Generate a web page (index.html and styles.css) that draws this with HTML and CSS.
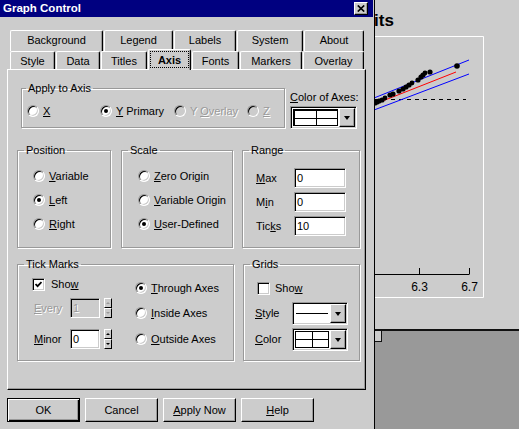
FILE: index.html
```html
<!DOCTYPE html>
<html lang="en">
<head>
<meta charset="utf-8">
<title>Graph Control</title>
<link rel="stylesheet" href="styles.css">
</head>
<body>
<div class="screen">
  <div class="dialog">
    <div class="titlebar">
      <span class="title">Graph Control</span>
      <span class="close"><svg width="8" height="7" viewBox="0 0 8 7"><path d="M0.8 0.5L7.2 6.5M7.2 0.5L0.8 6.5" stroke="#000" stroke-width="1.7" fill="none"/></svg></span>
    </div>

    <div class="tabs">
      <div class="tabrow row1">
        <div class="tab t-bg">Background</div>
        <div class="tab t-legend">Legend</div>
        <div class="tab t-labels">Labels</div>
        <div class="tab t-system">System</div>
        <div class="tab t-about">About</div>
      </div>
      <div class="tabrow row2">
        <div class="tab t-style">Style</div>
        <div class="tab t-data">Data</div>
        <div class="tab t-titles">Titles</div>
        <div class="tab t-axis active">Axis</div>
        <div class="tab t-fonts">Fonts</div>
        <div class="tab t-markers">Markers</div>
        <div class="tab t-overlay">Overlay</div>
      </div>
    </div>

    <div class="panel">
      <div class="prow r1">
        <fieldset class="grp g-apply">
          <legend class="lg lg-apply">Apply to Axis</legend>
          <div class="gb apply-body">
            <label class="opt o-x"><span class="radio"></span><span><u>X</u></span></label>
            <label class="opt o-yp"><span class="radio on"></span><span><u>Y</u> Primary</span></label>
            <label class="opt o-yo dis"><span class="radio"></span><span>Y <u>O</u>verlay</span></label>
            <label class="opt dis"><span class="radio"></span><span><u>Z</u></span></label>
          </div>
        </fieldset>
        <div class="coloraxes">
          <div class="ca-lbl"><u>C</u>olor of Axes:</div>
          <div class="combo c-axes">
            <div class="cf"><span class="sw-grid"></span></div>
            <span class="dd"></span>
          </div>
        </div>
      </div>

      <div class="prow r2">
        <fieldset class="grp g-pos">
          <legend class="lg">Position</legend>
          <div class="gb list-body pos-body">
            <label class="opt row"><span class="radio"></span><span><u>V</u>ariable</span></label>
            <label class="opt row"><span class="radio on"></span><span><u>L</u>eft</span></label>
            <label class="opt row"><span class="radio"></span><span><u>R</u>ight</span></label>
          </div>
        </fieldset>
        <fieldset class="grp g-scale">
          <legend class="lg">Scale</legend>
          <div class="gb list-body scale-body">
            <label class="opt row"><span class="radio"></span><span><u>Z</u>ero Origin</span></label>
            <label class="opt row"><span class="radio"></span><span><u>V</u>ariable Origin</span></label>
            <label class="opt row"><span class="radio on"></span><span><u>U</u>ser-Defined</span></label>
          </div>
        </fieldset>
        <fieldset class="grp g-range">
          <legend class="lg">Range</legend>
          <div class="gb range-body">
            <div class="rrow"><span class="rl"><u>M</u>ax</span><span class="field f-range">0</span></div>
            <div class="rrow"><span class="rl">M<u>i</u>n</span><span class="field f-range">0</span></div>
            <div class="rrow"><span class="rl">Tic<u>k</u>s</span><span class="field f-range">10</span></div>
          </div>
        </fieldset>
      </div>

      <div class="prow r3">
        <fieldset class="grp g-tick">
          <legend class="lg">Tick Marks</legend>
          <div class="gb tick-body">
            <div class="tcol">
              <label class="chkrow c-tick">
                <span class="check"><svg width="7" height="7" viewBox="0 0 7 7"><path d="M0.5 3L2.6 5.2L6.5 1" stroke="#000" stroke-width="1.8" fill="none"/></svg></span>
                <span>Sho<u>w</u></span>
              </label>
              <div class="spinrow sr1 dis">
                <span class="slbl"><u>E</u>very</span>
                <span class="field f-spin">1</span>
                <span class="spin"><span class="up"></span><span class="dn"></span></span>
              </div>
              <div class="spinrow sr2">
                <span class="slbl"><u>M</u>inor</span>
                <span class="field f-spin">0</span>
                <span class="spin"><span class="up"></span><span class="dn"></span></span>
              </div>
            </div>
            <div class="rcol">
              <label class="opt trow t1"><span class="radio on"></span><span><u>T</u>hrough Axes</span></label>
              <label class="opt trow t2"><span class="radio"></span><span><u>I</u>nside Axes</span></label>
              <label class="opt trow t3"><span class="radio"></span><span><u>O</u>utside Axes</span></label>
            </div>
          </div>
        </fieldset>
        <fieldset class="grp g-grids">
          <legend class="lg">Grids</legend>
          <div class="gb grids-body">
            <label class="chkrow c-grid"><span class="check"></span><span>Sho<u>w</u></span></label>
            <div class="crow cr1">
              <span class="clbl"><u>S</u>tyle</span>
              <div class="combo c-small">
                <div class="cf"><span class="sw-line"></span></div>
                <span class="dd"></span>
              </div>
            </div>
            <div class="crow cr2">
              <span class="clbl"><u>C</u>olor</span>
              <div class="combo c-small">
                <div class="cf"><span class="sw-grid"></span></div>
                <span class="dd"></span>
              </div>
            </div>
          </div>
        </fieldset>
      </div>
    </div>

    <div class="btnrow">
      <div class="btn def">OK</div>
      <div class="btn">Cancel</div>
      <div class="btn"><span><u>A</u>pply Now</span></div>
      <div class="btn"><span><u>H</u>elp</span></div>
    </div>
  </div>

  <div class="graphwin">
    <svg class="graph" width="144" height="429" viewBox="0 0 144 429">
      <text class="gtitle" x="-1" y="26">its</text>
      <path d="M0 36.5H108.5V297.5H0" stroke="#fff" stroke-width="1" fill="none"/>
      <path d="M0 99.5H91" stroke="#000" stroke-width="1" stroke-dasharray="4 4" fill="none"/>
      <path d="M-1 98L94 60" stroke="#0000ff" stroke-width="1" fill="none"/>
      <path d="M-1 110L94 74" stroke="#0000ff" stroke-width="1" fill="none"/>
      <path d="M0 104L81 72" stroke="#ff0000" stroke-width="1" fill="none"/>
      <g fill="#000">
        <circle cx="0" cy="103" r="2.6"/>
        <circle cx="2" cy="102" r="2.6"/>
        <circle cx="4" cy="101" r="2.6"/>
        <circle cx="7" cy="100" r="2.6"/>
        <circle cx="10" cy="98" r="2.4"/>
        <circle cx="15" cy="95" r="2.6"/>
        <circle cx="18" cy="94" r="2.6"/>
        <circle cx="24" cy="91" r="2.6"/>
        <circle cx="28" cy="89" r="2.6"/>
        <circle cx="31" cy="87" r="2.6"/>
        <circle cx="34" cy="85" r="2.6"/>
        <circle cx="37" cy="83" r="2.4"/>
        <circle cx="43" cy="80" r="2.6"/>
        <circle cx="46" cy="77" r="2.6"/>
        <circle cx="48" cy="75" r="2.6"/>
        <circle cx="50" cy="73" r="2.4"/>
        <circle cx="55" cy="72" r="2.6"/>
        <circle cx="82" cy="66" r="2.8"/>
      </g>
      <path d="M0 274.5H94.5M44.5 268V274M94.5 268V274" stroke="#000" stroke-width="1" fill="none"/>
      <text class="glbl" x="44.5" y="291" text-anchor="middle">6.3</text>
      <text class="glbl" x="94.5" y="291" text-anchor="middle">6.7</text>
      <rect x="0" y="330" width="144" height="99" fill="#999"/>
      <rect x="0" y="329" width="144" height="2" fill="#111"/>
      <rect x="0" y="331" width="6" height="10" fill="#ccc"/>
      <path d="M6.5 331V342M0 341.5H7" stroke="#111" stroke-width="1" fill="none"/>
    </svg>
  </div>
</div>
</body>
</html>
```
FILE: styles.css
```css
* { box-sizing: border-box; }
html, body { margin: 0; padding: 0; }
body {
  width: 519px; height: 429px; overflow: hidden;
  background: #ccc;
  font-family: "Liberation Sans", Arial, sans-serif;
  font-size: 11px; line-height: 13px; color: #000;
}
u { text-decoration: underline; text-underline-offset: 1px; }

.screen { display: flex; width: 519px; height: 429px; }
.dialog { width: 375px; flex: none; background: #ccc; border-right: 1px solid #000; }
.graphwin { flex: 1; }
.graph { display: block; }
.gtitle { font-family: "Liberation Sans", Arial, sans-serif; font-weight: bold; font-size: 17px; fill: #000; }
.glbl { font-family: "Liberation Sans", Arial, sans-serif; font-size: 12px; fill: #000; }

/* title bar */
.titlebar {
  height: 17px; margin-right: 1px;
  background: #000080; color: #fff;
  display: flex; align-items: center; justify-content: space-between;
  padding: 0 5px 0 3px;
}
.title { font-weight: bold; font-size: 11.5px; }
.close {
  width: 14px; height: 13px; background: #ccc;
  border: 1px solid; border-color: #fff #000 #000 #fff;
  box-shadow: inset -1px -1px 0 #999;
  display: flex; align-items: center; justify-content: center;
}
.close svg { display: block; }

/* tabs */
.tabs { margin: 13px 0 0 10px; }
.tabrow { display: flex; gap: 1px; align-items: flex-start; }
.tab {
  background: #ccc; text-align: center; white-space: nowrap;
  border: 1px solid #fff; border-bottom: none; border-right-color: #000;
  border-radius: 2px 2px 0 0;
  box-shadow: inset -1px 0 0 #999;
}
.row1 .tab { height: 21px; line-height: 19px; }
.row2 .tab { height: 18px; line-height: 16px; padding-top: 1px; }
.row2 .tab.active {
  position: relative; z-index: 1;
  height: 21px; margin-top: -2px; margin-bottom: -1px;
  padding-top: 2px; font-weight: bold;
  outline: 1px dotted #000; outline-offset: -3px;
}
.t-bg { width: 93px; } .t-legend { width: 69px; } .t-labels { width: 62px; }
.t-system { width: 66px; } .t-about { width: 60px; }
.t-style { width: 45px; } .t-data { width: 44px; } .t-titles { width: 46px; }
.t-axis { width: 43px; } .t-fonts { width: 47px; } .t-markers { width: 62px; }
.t-overlay { width: 61px; }

/* panel */
.panel {
  margin-left: 7px; width: 359px; height: 321px;
  border: 1px solid; border-color: #fff #000 #000 #fff;
  box-shadow: inset -1px -1px 0 #999;
}
.prow { display: flex; align-items: flex-start; }
.r1 { margin-top: 12px; }
.r2 { margin-top: 15px; }
.r3 { margin-top: 10px; }

.grp {
  margin: 0; padding: 0; min-width: 0;
  border: 1px solid #999;
  box-shadow: inset 1px 1px 0 #fff, 1px 1px 0 #fff;
}
.lg {
  margin-left: 6px; padding: 0 2px; height: 13px; line-height: 13px;
}
.lg-apply { margin-left: 4px; }
.g-apply { margin-left: 13px; width: 264px; height: 46px; }
.g-pos { margin-left: 9px; width: 94px; height: 104px; }
.g-scale { margin-left: 10px; width: 112px; height: 104px; }
.g-range { margin-left: 9px; width: 118px; height: 104px; }
.g-tick { margin-left: 9px; width: 217px; height: 103px; }
.g-grids { margin-left: 9px; width: 117px; height: 103px; }

.opt { display: flex; align-items: center; gap: 4px; white-space: nowrap; }
.dis { color: #999; text-shadow: 1px 1px 0 #fff; }

.radio {
  flex: none; width: 12px; height: 12px; border-radius: 50%;
  background: #fff;
  border: 1px solid; border-color: #999 #fff #fff #999;
  box-shadow: inset 1px 1px 0 #000, inset -1px -1px 0 #ccc;
  display: flex; align-items: center; justify-content: center;
}
.radio.on::after { content: ""; width: 4px; height: 4px; border-radius: 50%; background: #000; }
.dis .radio { background: #ccc; }

.check {
  flex: none; width: 13px; height: 13px; background: #fff;
  border: 1px solid; border-color: #999 #fff #fff #999;
  box-shadow: inset 1px 1px 0 #000, inset -1px -1px 0 #ccc;
  display: flex; align-items: center; justify-content: center;
}
.check svg { display: block; }

.field {
  display: block; height: 20px; background: #fff;
  border: 1px solid; border-color: #999 #fff #fff #999;
  box-shadow: inset 1px 1px 0 #000, inset -1px -1px 0 #ccc;
  padding: 0 2px; line-height: 18px;
}
.dis .field { background: #ccc; }

/* apply */
.apply-body { height: 32px; display: flex; align-items: center; padding-left: 5px; }
.o-x { width: 73px; } .o-yp { width: 74px; } .o-yo { width: 73px; }

.coloraxes { margin-left: 5px; width: 67px; padding-top: 8px; }
.ca-lbl { height: 14px; line-height: 14px; margin-bottom: 2px; white-space: nowrap; }

/* combos */
.combo {
  display: flex; height: 23px; padding: 1px; background: #fff;
  border: 1px solid; border-color: #999 #fff #fff #999;
  box-shadow: inset 1px 1px 0 #000, inset -1px -1px 0 #ccc;
}
.cf { flex: 1; display: flex; align-items: center; padding: 1px; }
.dd {
  flex: none; width: 16px; background: #ccc;
  border: 1px solid; border-color: #fff #000 #000 #fff;
  box-shadow: inset -1px -1px 0 #999;
  display: flex; align-items: center; justify-content: center;
}
.dd::before {
  content: ""; border-style: solid; border-width: 4px 3.5px 0 3.5px;
  border-color: #000 transparent transparent transparent;
}
.sw-grid {
  flex: 1; align-self: stretch; border: 1px solid #000;
  background:
    linear-gradient(#000, #000) center / 1px 100% no-repeat,
    linear-gradient(#000, #000) center / 100% 1px no-repeat,
    #fff;
}
.c-axes .sw-grid { border-width: 2px 1px 1px 2px; }
.sw-line { flex: 1; height: 1px; background: #000; margin: 0 1px; }
.c-small { width: 56px; }

/* position / scale */
.list-body { padding-top: 7px; }
.list-body .row { height: 24px; }
.pos-body { padding-left: 15px; }
.scale-body { padding-left: 16px; }

/* range */
.range-body { padding: 9px 0 0 13px; }
.rrow { display: flex; align-items: center; height: 24px; }
.rl { width: 38px; }
.f-range { width: 52px; }

/* tick marks */
.tick-body { display: flex; }
.tcol { width: 117px; padding-left: 14px; }
.chkrow { display: flex; align-items: center; gap: 6px; height: 13px; }
.c-tick { margin-top: 7px; }
.spinrow { display: flex; align-items: center; height: 20px; padding-left: 2px; }
.sr1 { margin-top: 7px; }
.sr2 { margin-top: 11px; }
.slbl { width: 36px; }
.f-spin { width: 30px; }
.spin { display: flex; flex-direction: column; width: 8px; height: 20px; margin-left: 4px; }
.spin span {
  flex: 1; background: #ccc;
  border: 1px solid; border-color: #fff #000 #000 #fff;
  display: flex; align-items: center; justify-content: center;
}
.spin .up::before {
  content: ""; border-style: solid; border-width: 0 2px 2px 2px;
  border-color: transparent transparent #000 transparent;
}
.spin .dn::before {
  content: ""; border-style: solid; border-width: 2px 2px 0 2px;
  border-color: #000 transparent transparent transparent;
}
.dis .spin .up::before { border-bottom-color: #999; }
.dis .spin .dn::before { border-top-color: #999; }

.rcol { padding-top: 5px; }
.trow { height: 26px; }
.trow.t1 { height: 24px; }

/* grids */
.grids-body { padding-left: 13px; }
.c-grid { margin-top: 11px; gap: 5px; }
.crow { display: flex; align-items: center; margin-left: -2px; }
.cr1 { margin-top: 7px; }
.cr2 { margin-top: 3px; }
.clbl { width: 37px; }

/* buttons */
.btnrow { display: flex; gap: 5px; margin: 8px 0 0 7px; }
.btn {
  width: 73px; height: 24px;
  border: 1px solid; border-color: #fff #000 #000 #fff;
  box-shadow: inset -1px -1px 0 #999;
  display: flex; align-items: center; justify-content: center;
}
.btn.def {
  border-color: #000;
  box-shadow: inset 1px 1px 0 #fff, inset -1px -1px 0 #000, inset -2px -2px 0 #999;
}
```
